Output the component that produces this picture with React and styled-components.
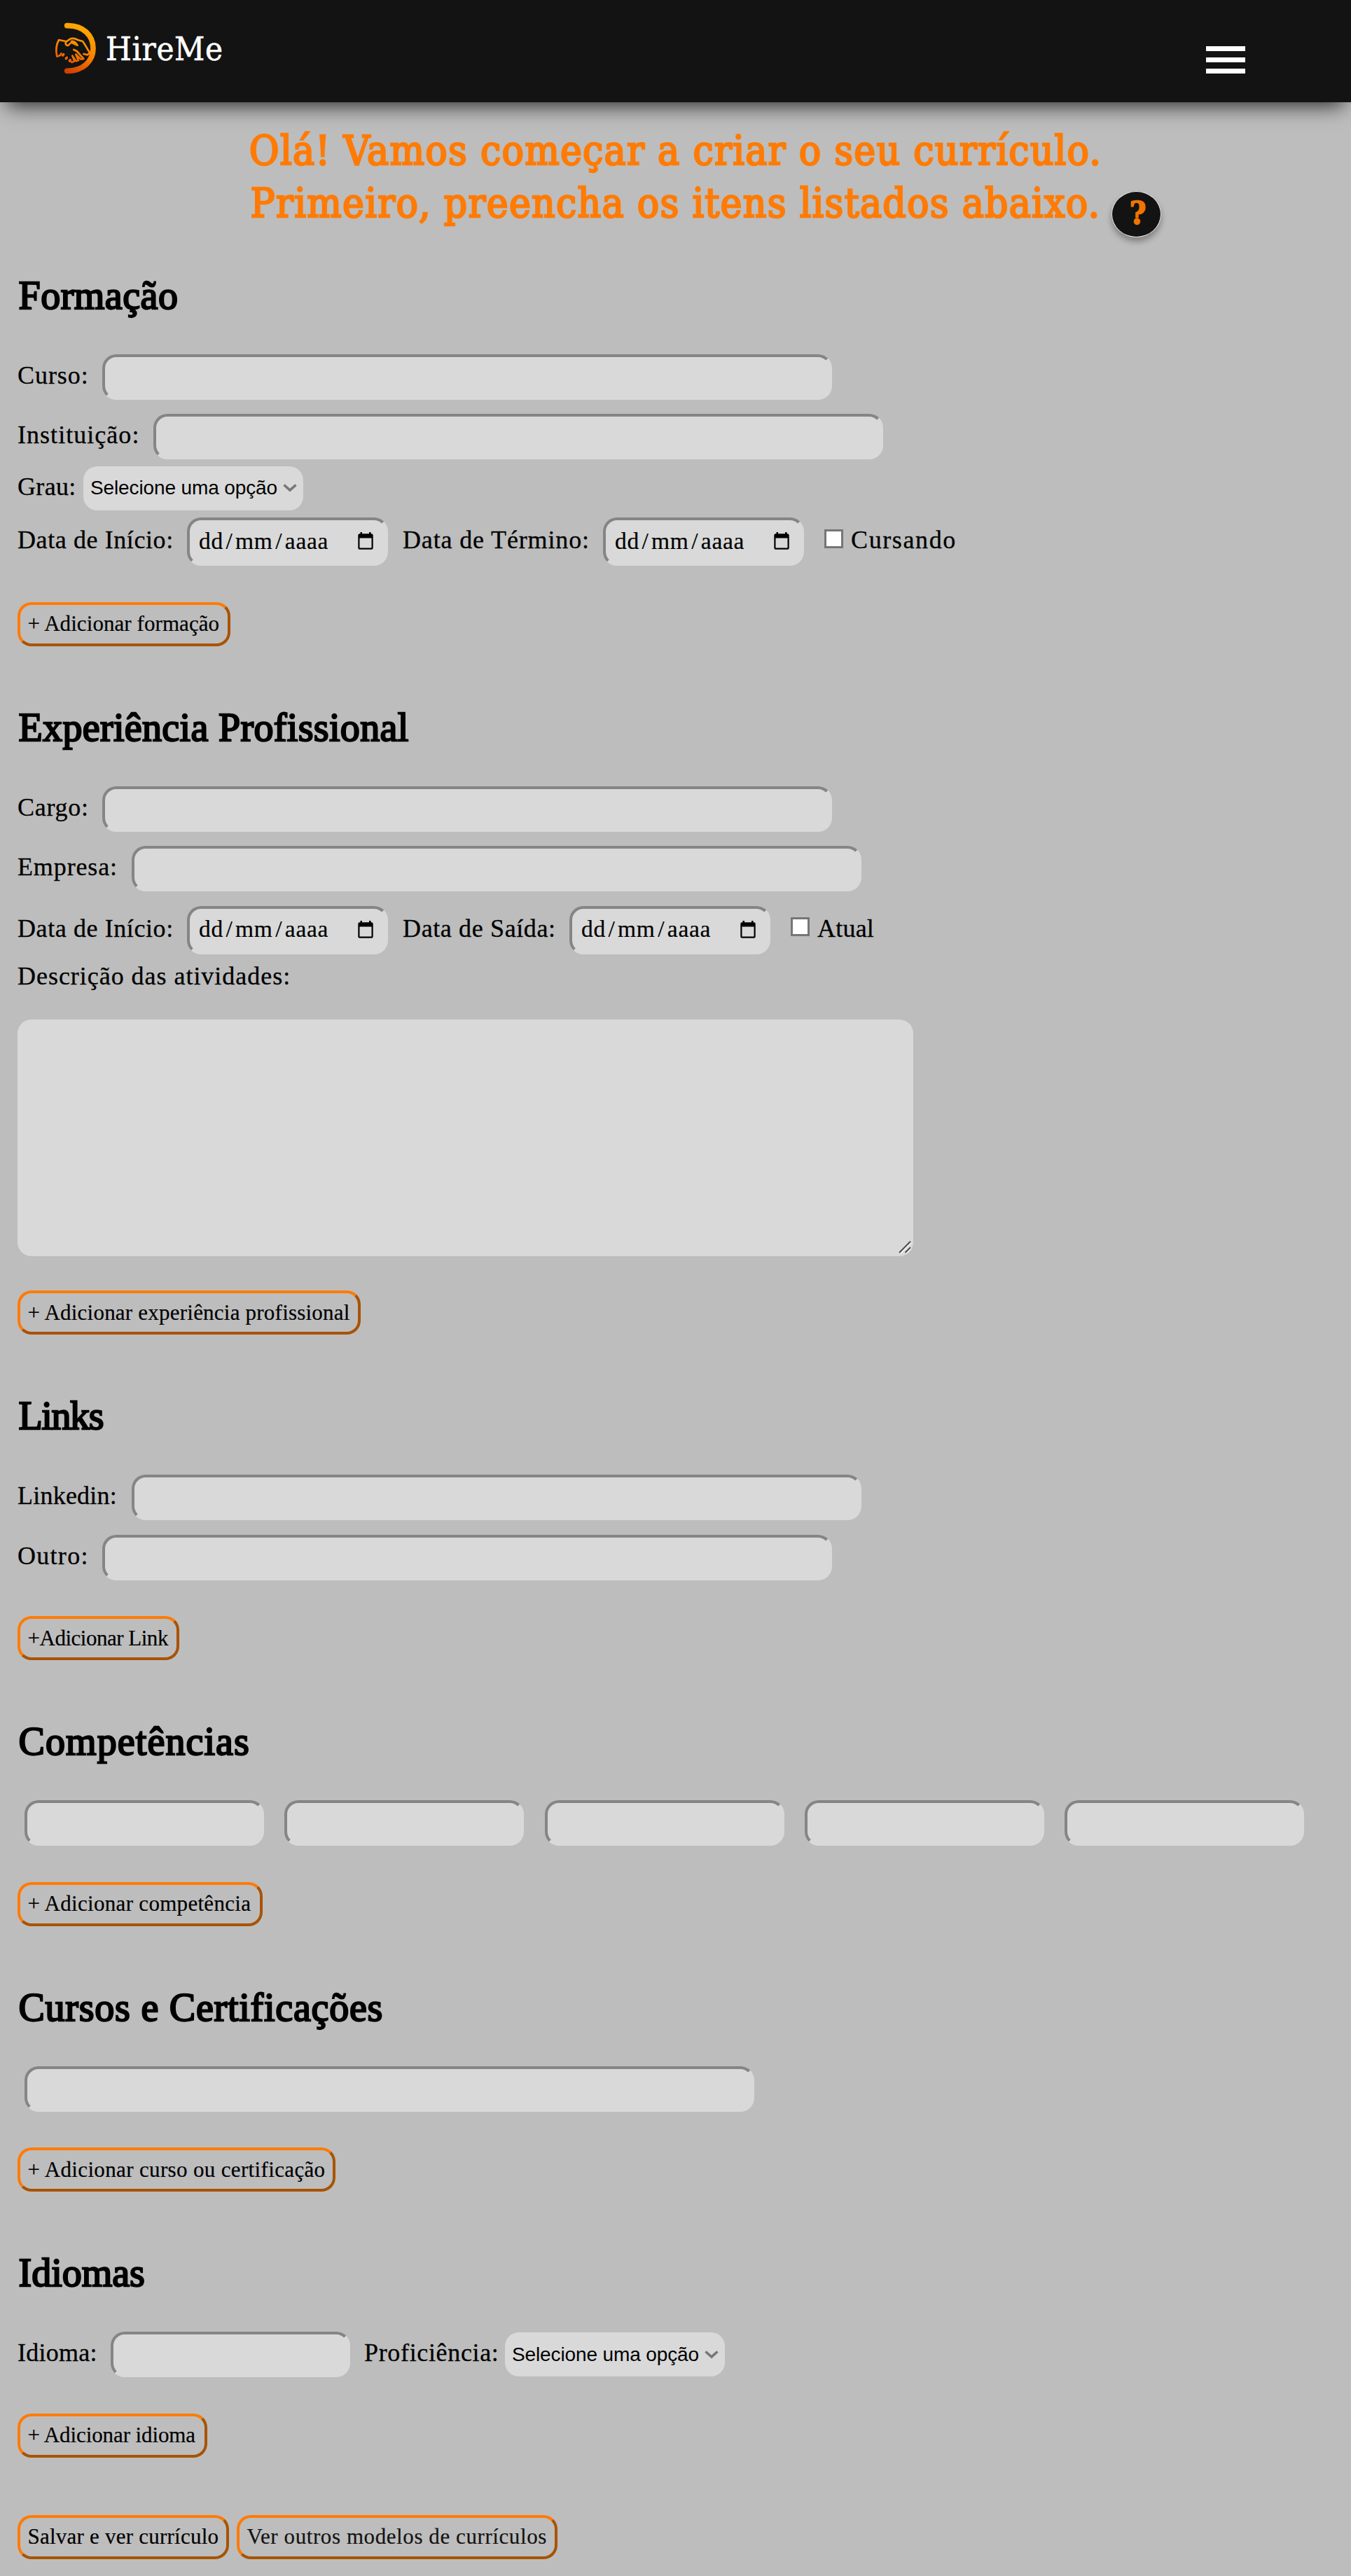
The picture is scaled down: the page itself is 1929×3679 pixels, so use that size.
import React from "react";
import styled, { createGlobalStyle, css } from "styled-components";

const serif = '"Liberation Serif", "Times New Roman", serif';
const display = '"DejaVu Serif Condensed", "DejaVu Serif", serif';

const colors = {
  ink: "#000",
  dark: "#131313",
  page: "#bdbdbd",
  field: "#d9d9d9",
  fieldShade: "#858585",
  orange: "#ff7b05",
  orangeShade: "#a85304",
};

const GlobalStyle = createGlobalStyle`
  * { box-sizing: border-box; }
  body {
    margin: 0;
    background: ${colors.page};
    color: ${colors.ink};
    font-family: ${serif};
  }
`;

const Page = styled.div`
  display: flex;
  flex-direction: column;
  min-height: 3679px;
`;

const Header = styled.header`
  display: flex;
  justify-content: space-between;
  align-items: flex-start;
  height: 145.5px;
  padding: 25px 151px 0 70px;
  background: ${colors.dark};
  box-shadow: 0 14px 28px -10px rgba(0, 0, 0, 0.82);
`;

const Brand = styled.a`
  display: flex;
  align-items: flex-start;
  color: #fff;
`;

const BrandName = styled.span`
  margin: 16px 0 0 1px;
  font: 400 47px/57px ${display};
  letter-spacing: 0.6px;
  -webkit-text-stroke: 0.6px #fff;
`;

const MenuButton = styled.button`
  display: flex;
  flex-direction: column;
  justify-content: space-between;
  width: 56.5px;
  height: 38.5px;
  margin-top: 41px;
  padding: 0;
  border: 0;
  background: none;
`;

const MenuBar = styled.span`
  width: 100%;
  height: 6.5px;
  background: #fff;
`;

const Intro = styled.div`
  display: grid;
  grid-template-columns: 1fr auto 1fr;
  align-items: end;
  padding-top: 32px;
`;

const Title = styled.h1`
  grid-column: 2;
  margin: 0;
  color: ${colors.orange};
  font: 400 58px/75px ${display};
  letter-spacing: 1.3px;
  text-align: center;
  white-space: nowrap;
  -webkit-text-stroke: 2.5px ${colors.orange};
`;

const HelpButton = styled.button`
  display: flex;
  align-items: center;
  justify-content: center;
  width: 71px;
  height: 66px;
  margin: 0 0 -11px 14px;
  padding: 0 0 1px 4px;
  border: 1.5px solid #e6e6e6;
  border-radius: 50%;
  background: ${colors.dark};
  box-shadow: 0 6px 8px rgba(0, 0, 0, 0.32);
  color: #f07500;
  font: 700 45px/50px ${display};
  -webkit-text-stroke: 1.6px #f07500;
`;

const Form = styled.form`
  display: flex;
  flex-direction: column;
  gap: 90px;
  padding: 68px 25px 0;
`;

const Section = styled.section`
  display: flex;
  flex-direction: column;
  align-items: flex-start;
`;

const Heading = styled.h2`
  height: 65px;
  margin: 0 0 45px 1.5px;
  font: 400 56px/52px ${serif};
  letter-spacing: ${(p) => p.$track}px;
  white-space: nowrap;
  -webkit-text-stroke: 2.3px ${colors.ink};
`;

const Fields = styled.div`
  display: flex;
  flex-direction: column;
  gap: 20.5px;
`;

const Row = styled.div`
  display: flex;
  align-items: center;
  margin-top: ${(p) => p.$top ?? 0}px;
`;

const Label = styled.label`
  flex: none;
  width: ${(p) => (p.$width ? `${p.$width}px` : "auto")};
  margin-left: ${(p) => p.$left ?? 0}px;
  padding-bottom: 5px;
  font-size: 36px;
  line-height: 40px;
  letter-spacing: ${(p) => p.$track + 0.12}px;
  white-space: nowrap;
  -webkit-text-stroke: 0.3px ${colors.ink};
`;

const insetBorder = css`
  border: 4px solid;
  border-color: ${colors.fieldShade} ${colors.field} ${colors.field} ${colors.fieldShade};
  border-radius: 20px;
  background: ${colors.field};
`;

const TextInput = styled.input`
  ${insetBorder}
  width: ${(p) => (p.$short ? 342 : 1041.5)}px;
  height: 65px;
  padding: 8px 14px;
  outline: 0;
  font: 32px ${serif};
`;

const SkillRow = styled(Row)`
  gap: 29.3px;
  padding-left: 10px;
`;

const DateBox = styled.div`
  ${insetBorder}
  display: flex;
  align-items: center;
  justify-content: space-between;
  width: 287px;
  height: 69px;
  padding: 0 17px 2px 13px;
  font-size: 33.5px;
  letter-spacing: 0.7px;
`;

const DateText = styled.span`
  display: flex;
  gap: 3.6px;
  -webkit-text-stroke: 0.2px ${colors.ink};
`;

const SelectBox = styled.div`
  display: flex;
  align-items: center;
  justify-content: space-between;
  width: 314px;
  height: 62.7px;
  padding: 0 9px 0 10px;
  border-radius: 20px;
  background: ${colors.field};
  font: 28px "Liberation Sans", Arial, sans-serif;
  letter-spacing: -0.12px;
`;

const Checkbox = styled.input`
  appearance: none;
  width: 27px;
  height: 27px;
  margin: 0 0 9px 29px;
  border: 3px solid #767676;
  background: #fff;
`;

const Description = styled.div`
  position: relative;
  width: 1279px;
  height: 338px;
  margin-top: 36.5px;
`;

const TextArea = styled.textarea`
  display: block;
  width: 100%;
  height: 100%;
  border: 0;
  border-radius: 20px;
  background: ${colors.field};
  resize: none;
`;

const ResizeGrip = styled.svg`
  position: absolute;
  right: 2px;
  bottom: 3px;
`;

const ActionButton = styled.button`
  width: ${(p) => p.$width}px;
  height: 63px;
  margin-top: ${(p) => p.$top ?? 0}px;
  padding: 0 0 0 10.5px;
  border: 4px solid;
  border-color: ${colors.orange} ${colors.orangeShade} ${colors.orangeShade} ${colors.orange};
  border-radius: 20px;
  background: none;
  color: ${(p) => (p.$soft ? colors.dark : colors.ink)};
  font: 31px ${serif};
  letter-spacing: ${(p) => p.$track + 0.03}px;
  text-align: left;
  white-space: nowrap;
  -webkit-text-stroke: 0.2px currentColor;
`;

const Actions = styled.div`
  display: flex;
  gap: 11px;
  margin-top: -8px;
`;

const Logo = () => (
  <svg width="80" height="85" viewBox="0 0 240 255" fill="none" stroke="url(#flame)" strokeLinecap="round" strokeLinejoin="round">
    <defs>
      <linearGradient id="flame" gradientUnits="userSpaceOnUse" x1="150" y1="50" x2="80" y2="235">
        <stop offset="0" stopColor="#ffa600" />
        <stop offset="0.5" stopColor="#fb8200" />
        <stop offset="1" stopColor="#cc3f05" />
      </linearGradient>
    </defs>
    <path strokeWidth="23" d="M77 35 C146 33 189 77 189 132 C189 187 146 229 77 229" />
    <g strokeWidth="8">
      <path d="M72 102 L42 96 C31 116 28 141 34 167 L48 162 L52 154" />
      <path d="M74 103 C67 113 74 124 84 118 C89 112 91 108 98 108 L122 119 C115 108 106 99 96 102" />
      <path d="M74 103 L92 91 C104 87 113 90 123 96 L144 102 C158 119 163 137 175 151 L165 160 L148 156" />
      <path d="M106 138 L119 144 L148 177 L136 179 L115 158 M115 158 L126 184 L116 187 L100 164 M100 164 L109 187 L98 192 L88 184" />
    </g>
    <g strokeWidth="11">
      <path d="M59 162 L62 158 M73 176 L76 172 M88 186 L91 182" />
    </g>
  </svg>
);

const CalendarIcon = () => (
  <svg width="22" height="25" viewBox="0 0 22 25">
    <path fill="#000" fillRule="evenodd" d="M3.5 0H6V2.3H16V0H18.5V2.3H19.5A2.2 2.2 0 0 1 21.7 4.5V22.5A2.2 2.2 0 0 1 19.5 24.7H2.5A2.2 2.2 0 0 1 .3 22.5V4.5A2.2 2.2 0 0 1 2.5 2.3H3.5ZM2.5 8.5V22.5H19.5V8.5Z" />
  </svg>
);

const Chevron = () => (
  <svg width="20" height="12" viewBox="0 0 20 12" fill="none" stroke="#777" strokeWidth="3.6">
    <path d="M1.5 1.5 L10 9 L18.5 1.5" />
  </svg>
);

const DateInput = () => (
  <DateBox>
    <DateText>
      <span>dd</span>
      <span>/</span>
      <span>mm</span>
      <span>/</span>
      <span>aaaa</span>
    </DateText>
    <CalendarIcon />
  </DateBox>
);

const Select = () => (
  <SelectBox role="combobox">
    <span>Selecione uma opção</span>
    <Chevron />
  </SelectBox>
);

const Field = ({ label, width, track, short }) => (
  <Row>
    <Label $width={width} $track={track}>{label}</Label>
    <TextInput $short={short} />
  </Row>
);

export default function App() {
  return (
    <Page>
      <GlobalStyle />
      <Header>
        <Brand>
          <Logo />
          <BrandName>HireMe</BrandName>
        </Brand>
        <MenuButton aria-label="Menu">
          <MenuBar />
          <MenuBar />
          <MenuBar />
        </MenuButton>
      </Header>

      <Intro>
        <Title>
          Olá! Vamos começar a criar o seu currículo.
          <br />
          Primeiro, preencha os itens listados abaixo.
        </Title>
        <HelpButton>?</HelpButton>
      </Intro>

      <Form>
        <Section>
          <Heading $track={0.5}>Formação</Heading>
          <Fields>
            <Field label="Curso:" width={121} track={0.83} />
            <Field label="Instituição:" width={194} track={0.92} />
          </Fields>
          <Row $top={10}>
            <Label $width={94} $track={0.21}>Grau:</Label>
            <Select />
          </Row>
          <Row $top={10.5}>
            <Label $width={242} $track={0.47}>Data de Início:</Label>
            <DateInput />
            <Label $left={21} $width={286} $track={0.73}>Data de Término:</Label>
            <DateInput />
            <Checkbox type="checkbox" />
            <Label $left={11} $track={1.5}>Cursando</Label>
          </Row>
          <ActionButton type="button" $top={51.5} $width={304} $track={0.04}>+ Adicionar formação</ActionButton>
        </Section>

        <Section>
          <Heading $track={0.34}>Experiência Profissional</Heading>
          <Fields>
            <Field label="Cargo:" width={121} track={0.61} />
            <Field label="Empresa:" width={163} track={0.76} />
            <Row>
              <Label $width={242} $track={0.47}>Data de Início:</Label>
              <DateInput />
              <Label $left={21} $width={238} $track={0.51}>Data de Saída:</Label>
              <DateInput />
              <Checkbox type="checkbox" />
              <Label $left={11} $track={0.1}>Atual</Label>
            </Row>
          </Fields>
          <Row $top={11.5}>
            <Label $track={0.85}>Descrição das atividades:</Label>
          </Row>
          <Description>
            <TextArea />
            <ResizeGrip width="20" height="20" viewBox="0 0 20 20" fill="none">
              <path stroke="#eee" strokeWidth="2" d="M4 19 L19 4 M12 19 L19 12" />
              <path stroke="#444" strokeWidth="1.8" d="M2 18 L18 2 M10.5 18 L18 10.5" />
            </ResizeGrip>
          </Description>
          <ActionButton type="button" $top={49.5} $width={490} $track={0.19}>+ Adicionar experiência profissional</ActionButton>
        </Section>

        <Section>
          <Heading $track={-1.4}>Links</Heading>
          <Fields>
            <Field label="Linkedin:" width={163} track={0.11} />
            <Field label="Outro:" width={121} track={1.17} />
          </Fields>
          <ActionButton type="button" $top={51.5} $width={231} $track={-0.52}>+Adicionar Link</ActionButton>
        </Section>

        <Section>
          <Heading $track={1.1}>Competências</Heading>
          <SkillRow>
            <TextInput $short />
            <TextInput $short />
            <TextInput $short />
            <TextInput $short />
            <TextInput $short />
          </SkillRow>
          <ActionButton type="button" $top={51.5} $width={350} $track={0.27}>+ Adicionar competência</ActionButton>
        </Section>

        <Section>
          <Heading $track={0.76}>Cursos e Certificações</Heading>
          <SkillRow>
            <TextInput />
          </SkillRow>
          <ActionButton type="button" $top={51.5} $width={454} $track={0.32}>+ Adicionar curso ou certificação</ActionButton>
        </Section>

        <Section>
          <Heading $track={0}>Idiomas</Heading>
          <Row>
            <Label $width={133} $track={0.15}>Idioma:</Label>
            <TextInput $short />
            <Label $left={20} $width={201} $track={0.54}>Proficiência:</Label>
            <Select />
          </Row>
          <ActionButton type="button" $top={51.5} $width={271} $track={-0.13}>+ Adicionar idioma</ActionButton>
        </Section>

        <Actions>
          <ActionButton type="button" $width={302} $track={0.2}>Salvar e ver currículo</ActionButton>
          <ActionButton type="button" $width={458} $track={0.55} $soft>Ver outros modelos de currículos</ActionButton>
        </Actions>
      </Form>
    </Page>
  );
}
